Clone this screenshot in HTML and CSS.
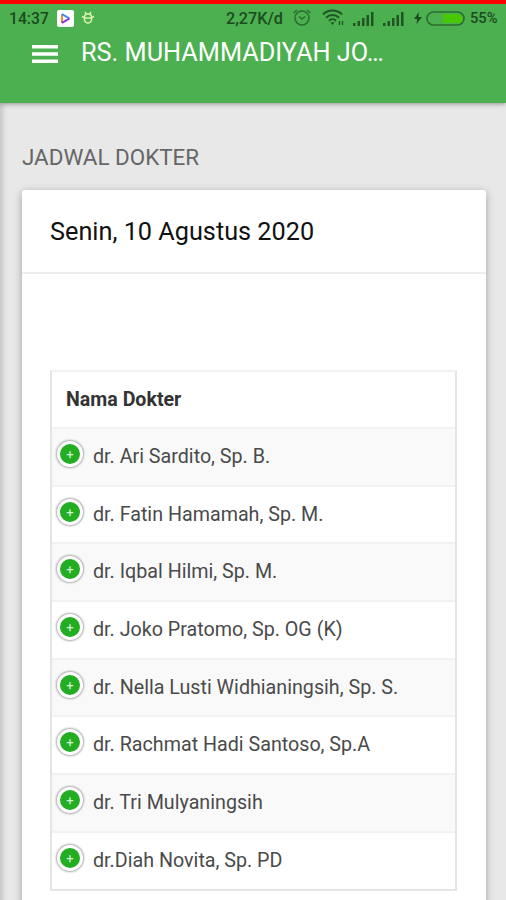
FILE: index.html
```html
<!DOCTYPE html>
<html lang="id">
<head>
    <meta charset="UTF-8">
    <meta name="viewport" content="width=device-width, initial-scale=1.0">
    <title>Jadwal Dokter</title>
    <link rel="stylesheet" href="styles.css">
</head>
<body>
    <header class="topbar">
        <div class="status">
            <span class="jam">14:37</span>
            <svg class="app-icon" width="17" height="17" viewBox="0 0 17 17">
                <rect width="17" height="17" rx="2" fill="#fff"/>
                <path d="M5 4v9" stroke="#f58a3c" stroke-width="2" fill="none"/>
                <path d="M5 4.2l7.5 4.3" stroke="#3b8cf0" stroke-width="2" fill="none"/>
                <path d="M12.5 8.5L5 12.8" stroke="#8236d8" stroke-width="2" fill="none"/>
            </svg>
            <svg class="bug-icon" width="14" height="14" viewBox="0 0 14 14" fill="none" stroke="#d9f5a8" stroke-width="1.5">
                <path d="M4 1l1.5 2.500M10 1L8.500 3.500M1 5.500l2 1M13 5.500l-2 1"/>
                <path d="M3.500 6a3.500 3 0 0 1 7 0v2.500a3.500 3.500 0 0 1-7 0zM3.500 7h7"/>
            </svg>
            <span class="speed">2,27K/d</span>
            <svg class="alarm" width="20" height="18" viewBox="0 0 20 18" fill="none" stroke="#2b6d2e" stroke-width="1.5">
                <circle cx="10" cy="9" r="7"/>
                <path d="M1.500 4L5 1M18.500 4L15 1M7 7.500l3 2.500 3-2.500"/>
            </svg>
            <svg class="wifi" width="23" height="18" viewBox="0 0 23 18" fill="none" stroke="#1f5522" stroke-width="2">
                <path d="M1 5.500a13.500 13.500 0 0 1 19 0M4 8.700a9.200 9.200 0 0 1 13 0M7 11.700a5 5 0 0 1 7 0"/>
                <path d="M8.500 13.200h4l-2 2.800z" fill="#1f5522" stroke="none"/>
                <path d="M17.500 12v4M20.500 12v4" stroke-width="1.300"/>
            </svg>
            <svg class="signal" width="21" height="15" viewBox="0 0 21 15" fill="#1f5522">
                <path d="M0 12h2.500v3H0zM4.500 10H7v5H4.500zM9 7h2.500v8H9zM13.500 4H16v11h-2.500zM18 1h2.500v14H18z"/>
            </svg>
            <svg class="signal second" width="21" height="15" viewBox="0 0 21 15" fill="#1f5522">
                <path d="M0 12h2.500v3H0zM4.500 10H7v5H4.500zM9 7h2.500v8H9zM13.500 4H16v11h-2.500zM18 1h2.500v14H18z"/>
            </svg>
            <svg class="bolt" width="8" height="12" viewBox="0 0 8 12" fill="#1b4b1e">
                <path d="M5 0L0 7h3.200L2.500 12 8 5H4.500z"/>
            </svg>
            <svg class="battery" width="39" height="15" viewBox="0 0 39 15">
                <rect x="1" y="1" width="37" height="13" rx="6.500" fill="none" stroke="#2b6d2e" stroke-width="1.600"/>
                <path d="M17 3h15a4.500 4.500 0 0 1 0 9H17z" fill="#48c800"/>
            </svg>
            <span class="persen">55%</span>
        </div>
        <div class="navbar">
            <button class="menu" aria-label="Menu">
                <svg width="26" height="18" viewBox="0 0 26 18" fill="#fff">
                    <path d="M0 0h26v3.500H0zM0 7.200h26v3.500H0zM0 14.400h26v3.500H0z"/>
                </svg>
            </button>
            <h1 class="brand">RS. MUHAMMADIYAH JO…</h1>
        </div>
    </header>

    <main class="content">
        <h2 class="block-header">JADWAL DOKTER</h2>
        <div class="card">
            <div class="card-header">Senin, 10 Agustus 2020</div>
            <div class="card-body">
                <table class="jadwal">
                    <thead>
                        <tr><th>Nama Dokter</th></tr>
                    </thead>
                    <tbody>
                        <tr><td>dr. Ari Sardito, Sp. B.</td></tr>
                        <tr><td>dr. Fatin Hamamah, Sp. M.</td></tr>
                        <tr><td>dr. Iqbal Hilmi, Sp. M.</td></tr>
                        <tr><td>dr. Joko Pratomo, Sp. OG (K)</td></tr>
                        <tr><td>dr. Nella Lusti Widhianingsih, Sp. S.</td></tr>
                        <tr><td>dr. Rachmat Hadi Santoso, Sp.A</td></tr>
                        <tr><td>dr. Tri Mulyaningsih</td></tr>
                        <tr><td>dr.Diah Novita, Sp. PD</td></tr>
                    </tbody>
                </table>
            </div>
        </div>
    </main>
</body>
</html>
```

FILE: styles.css
```css
* {
    box-sizing: border-box;
}
body {
    margin: 0;
    height: 900px;
    overflow: hidden;
    background-color: #e8e8e8;
    font-family: Roboto, sans-serif;
}
.topbar {
    position: relative;
    height: 103px;
    border-top: 4px solid #ff0000;
    background-color: #4caf50;
    box-shadow: 0 1px 5px rgba(0, 0, 0, 0.35);
}
.status {
    display: flex;
    align-items: center;
    height: 28px;
    padding-left: 9px;
    color: #1b4b1e;
    font-size: 15.7px;
    font-weight: 500;
    white-space: nowrap;
}
.status svg {
    flex: none;
}
.jam {
    width: 48px;
}
.bug-icon {
    margin-left: 7px;
}
.speed {
    width: 66px;
    margin-left: 131px;
    font-size: 16.2px;
}
.wifi {
    margin-left: 10px;
}
.signal {
    margin-left: 8px;
}
.signal.second {
    margin-left: 9px;
}
.bolt {
    margin-left: 10px;
}
.battery {
    margin-left: 4px;
}
.persen {
    margin-left: 5px;
    font-size: 14.7px;
}
.navbar {
    display: flex;
    align-items: center;
    height: 44px;
    padding-left: 32px;
}
.menu {
    display: flex;
    padding: 0;
    border: none;
    background: none;
}
.brand {
    margin: 0 0 2px 23px;
    color: #fff;
    font-size: 25.3px;
    font-weight: 400;
    line-height: 34px;
    white-space: nowrap;
}
.content {
    min-height: 797px;
    padding: 39px 20px 0 22px;
    box-shadow: inset 6px 0 5px -3px rgba(0, 0, 0, 0.15);
}
.block-header {
    margin: 0 0 18px;
    color: #666;
    font-size: 22.4px;
    font-weight: 400;
    line-height: 30px;
}
.card {
    height: 740px;
    background-color: #fff;
    border-radius: 3px;
    box-shadow: 0 2px 9px rgba(0, 0, 0, 0.3);
}
.card-header {
    height: 84px;
    padding: 0 28px;
    border-bottom: 2px solid #eee;
    color: #111;
    font-size: 25.25px;
    line-height: 83px;
}
.card-body {
    padding: 96px 29px 0 28px;
}
.jadwal {
    width: 100%;
    border: 2px solid #e5e5e5;
    border-top-color: #f2f2f2;
    border-spacing: 0;
    color: #4a4a4a;
    font-size: 19.7px;
    text-align: left;
}
.jadwal th,
.jadwal td {
    height: 57.7px;
    padding: 0 0 0 14px;
    line-height: 26px;
}
.jadwal th {
    height: 55px;
    color: #333;
    font-size: 19.6px;
    font-weight: 700;
}
.jadwal td {
    position: relative;
    padding-left: 41px;
    border-top: 2px solid #f2f2f2;
}
.jadwal tbody tr:nth-child(odd) {
    background-color: #f9f9f9;
}
/* tombol buka detail */
.jadwal td::before {
    content: "+";
    position: absolute;
    top: 12px;
    left: 5px;
    box-sizing: border-box;
    width: 26px;
    height: 26px;
    border: 3px solid #fff;
    border-radius: 50%;
    background-color: #22ad22;
    box-shadow: 0 0 2px 1px #aaa;
    color: #d8f3d8;
    font-size: 13px;
    line-height: 21px;
    text-align: center;
}
```
